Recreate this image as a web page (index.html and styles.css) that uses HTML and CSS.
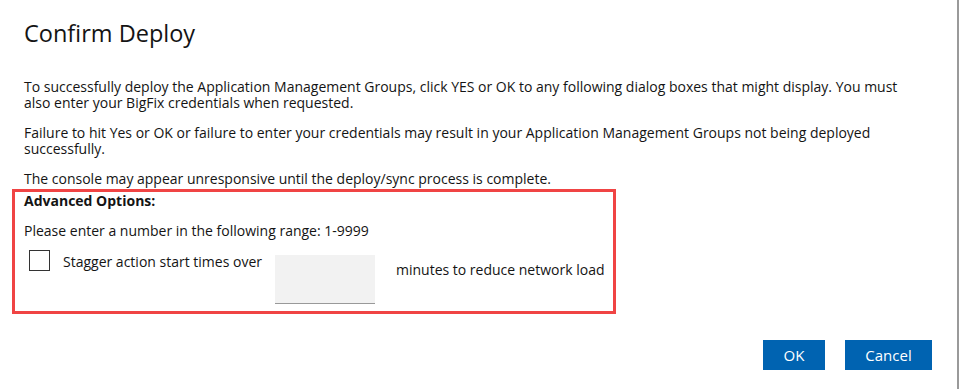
FILE: index.html
```html
<!DOCTYPE html>
<html lang="en">
<head>
  <meta charset="UTF-8">
  <title>Confirm Deploy</title>
  <link rel="stylesheet" href="styles.css">
</head>
<body>
  <div class="dialog">
    <h1 class="title">Confirm Deploy</h1>
    <p>To successfully deploy the Application Management Groups, click YES or OK to any following dialog boxes that might display. You must also enter your BigFix credentials when requested.</p>
    <p>Failure to hit Yes or OK or failure to enter your credentials may result in your Application Management Groups not being deployed successfully.</p>
    <p>The console may appear unresponsive until the deploy/sync process is complete.</p>

    <div class="advanced">
      <div class="adv-title">Advanced Options:</div>
      <div class="adv-hint">Please enter a number in the following range: 1-9999</div>
      <div class="stagger-row">
        <span class="checkbox"></span>
        <span class="stagger-label">Stagger action start times over</span>
        <input class="stagger-input" type="text">
        <span class="stagger-suffix">minutes to reduce network load</span>
      </div>
    </div>

    <div class="actions">
      <button class="btn btn-ok">OK</button>
      <button class="btn btn-cancel">Cancel</button>
    </div>
  </div>
</body>
</html>
```

FILE: styles.css
```css
body {
  margin: 0;
  padding: 0;
  background-color: #FFFFFF;
  font-family: 'Open Sans', 'Noto Sans', sans-serif;
  color: #141414;
}

.dialog {
  width: 959px;
  height: 389px;
  box-sizing: border-box;
  border-right: 2px solid #9a9a9a;
  padding: 19px 25px 0 24px;
}

.title {
  margin: 0 0 32px 0;
  font-size: 23.5px;
  line-height: 28px;
  font-weight: 400;
}

p {
  max-width: 880px;
  margin: 0 0 14px 0;
  font-size: 14px;
  line-height: 16px;
}

p:last-of-type {
  margin-bottom: 2px;
}

.advanced {
  width: 604px;
  margin-left: -12px;
  box-sizing: border-box;
  border: 3px solid #f04444;
  padding: 1px 0 7px 9px;
  font-size: 14px;
  line-height: 16px;
}

.adv-title {
  font-weight: 700;
  margin-bottom: 14px;
}

.adv-hint {
  margin-bottom: 11px;
}

.stagger-row {
  display: flex;
  align-items: flex-start;
}

.checkbox {
  width: 19px;
  height: 19px;
  border: 1px solid #333;
  margin-left: 5px;
}

.stagger-label {
  margin-left: 13px;
  margin-top: 4px;
}

.stagger-input {
  width: 100px;
  height: 49px;
  box-sizing: border-box;
  margin: 5px 0 0 13px;
  padding: 0 6px;
  border: none;
  border-bottom: 1px solid #999;
  background-color: #f2f2f2;
  font-family: inherit;
}

.stagger-suffix {
  margin-left: 21px;
  margin-top: 12px;
}

.actions {
  display: flex;
  justify-content: flex-end;
  gap: 20px;
  margin-top: 26px;
}

.btn {
  height: 30px;
  border: none;
  background-color: #0063b1;
  color: #FFFFFF;
  font-family: inherit;
  font-size: 15px;
}

.btn-ok {
  width: 62px;
}

.btn-cancel {
  width: 87px;
}
```
